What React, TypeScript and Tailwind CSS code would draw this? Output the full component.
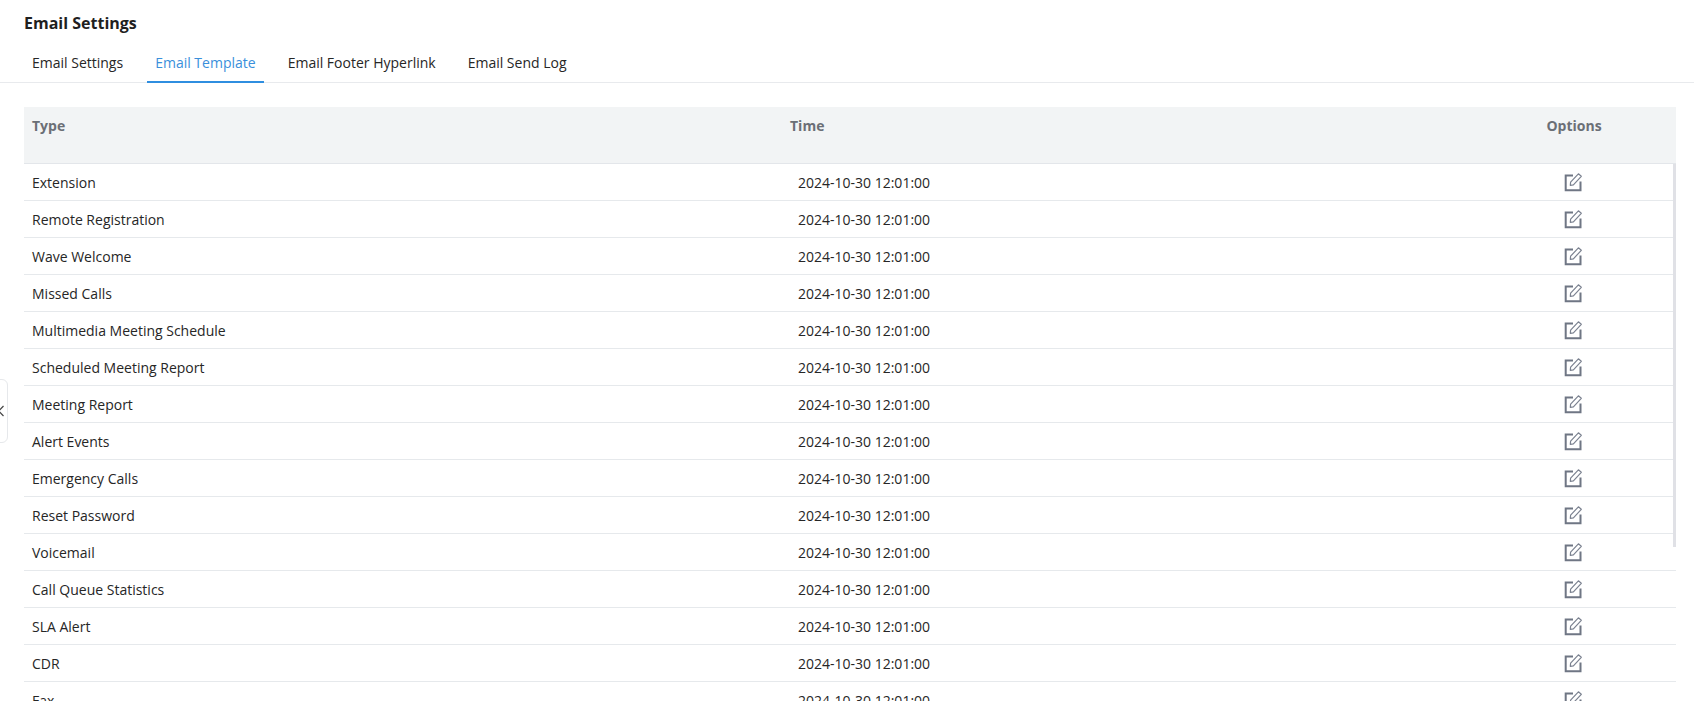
const rows = ["Extension","Remote Registration","Wave Welcome","Missed Calls","Multimedia Meeting Schedule","Scheduled Meeting Report","Meeting Report","Alert Events","Emergency Calls","Reset Password","Voicemail","Call Queue Statistics","SLA Alert","CDR","Fax"];
const tabs = ["Email Settings","Email Template","Email Footer Hyperlink","Email Send Log"];

function EditIcon() {
  return (
    <svg width="20" height="20" viewBox="0 0 20 20" fill="none" className="block">
      <path d="M10 3.5H2.7V18.2H17.5V9.5" stroke="#6f7684" strokeWidth="2" />
      <path d="M7.6 10.2 15.4 1.8 18.3 4.3 10.4 12.8 7.3 13.4Z" stroke="#7b8290" strokeWidth="1.2" strokeLinejoin="round" />
    </svg>
  );
}

export default function App() {
  return (
    <div className="relative h-[701px] w-[1694px] overflow-hidden bg-white text-[14px] text-[#262626]" style={{ fontFamily: '"Open Sans", "Noto Sans", sans-serif' }}>
      <div className="px-6 pt-[12px] text-[16px] leading-[22px] font-bold text-[#1f1f1f]">Email Settings</div>
      <div className="mt-[10px] flex h-[39px] gap-4 border-b border-[#e8eaed] px-6">
        {tabs.map((t, i) => (
          <div key={t} className={i === 1 ? "h-[39px] border-b-2 border-[#2f8ee0] px-2 pt-[9px] leading-[20px] text-[#3a8fdb]" : "h-[38px] px-2 pt-[9px] leading-[20px]"}>{t}</div>
        ))}
      </div>
      <div className="relative mt-[24px] mr-[18px] ml-6">
        <div className="flex h-[57px] border-b border-[#e3e6ea] bg-[#f2f4f5] pt-[9px] text-[14px] leading-[20px] font-bold text-[#6b6f76]">
          <div className="w-[766px] pl-2">Type</div>
          <div className="flex-1">Time</div>
          <div className="w-[204px] text-center">Options</div>
        </div>
        {rows.map((r) => (
          <div key={r} className="flex h-[37px] items-center border-b border-[#e6e9ec]">
            <div className="w-[774px] pl-2">{r}</div>
            <div className="flex-1">2024-10-30 12:01:00</div>
            <div className="flex w-[206px] justify-center pb-[1px]"><EditIcon /></div>
          </div>
        ))}
        <div className="absolute top-[57px] right-0 h-[383px] w-[3px] bg-[#e0e1e6]" />
      </div>
      <div className="absolute top-[379px] left-[-12px] h-[64px] w-[20px] rounded-[6px] border border-[#e6e8eb] bg-white" />
      <svg width="6" height="12" viewBox="0 0 6 12" fill="none" className="absolute top-[405px] left-[-2px]"><path d="M5.5 1 .8 6l4.7 5" stroke="#444" strokeWidth="1.2" /></svg>
    </div>
  );
}
